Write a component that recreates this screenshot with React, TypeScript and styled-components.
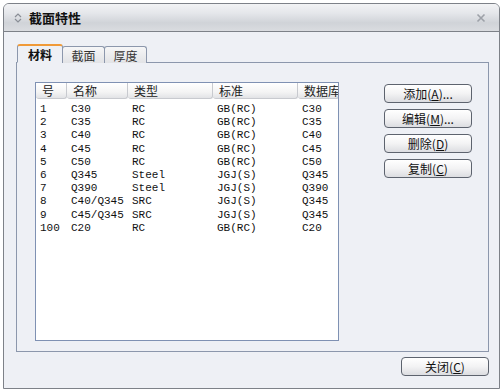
import * as React from 'react';
import styled, { createGlobalStyle } from 'styled-components';

const GlobalStyle = createGlobalStyle`
  html, body {
    margin: 0;
    padding: 0;
    background: #ffffff;
  }
  body {
    font-family: 'Liberation Sans', 'Noto Sans CJK SC', sans-serif;
    font-size: 12px;
    color: #000;
  }
`;

const rows = [
  ['1', 'C30', 'RC', 'GB(RC)', 'C30'],
  ['2', 'C35', 'RC', 'GB(RC)', 'C35'],
  ['3', 'C40', 'RC', 'GB(RC)', 'C40'],
  ['4', 'C45', 'RC', 'GB(RC)', 'C45'],
  ['5', 'C50', 'RC', 'GB(RC)', 'C50'],
  ['6', 'Q345', 'Steel', 'JGJ(S)', 'Q345'],
  ['7', 'Q390', 'Steel', 'JGJ(S)', 'Q390'],
  ['8', 'C40/Q345', 'SRC', 'JGJ(S)', 'Q345'],
  ['9', 'C45/Q345', 'SRC', 'JGJ(S)', 'Q345'],
  ['100', 'C20', 'RC', 'GB(RC)', 'C20'],
];

const columns = [
  { title: '号', width: 31 },
  { title: '名称', width: 61 },
  { title: '类型', width: 85 },
  { title: '标准', width: 85 },
  { title: '数据库', width: 41 },
];

const actions = [
  { label: '添加', key: 'A', tail: '...' },
  { label: '编辑', key: 'M', tail: '...' },
  { label: '删除', key: 'D', tail: '' },
  { label: '复制', key: 'C', tail: '' },
];

export default function App() {
  return (
    <>
      <GlobalStyle />
      <Window>
        <TitleBar>
          <TitleIcon viewBox="0 0 8 10">
            <path d="M1 4 L4 1 L7 4" fill="none" stroke="#8a8e96" strokeWidth="1.2" />
            <path d="M1 6 L4 9 L7 6" fill="none" stroke="#8a8e96" strokeWidth="1.2" />
          </TitleIcon>
          <Title>截面特性</Title>
          <CloseX viewBox="0 0 10 10">
            <path d="M1.5 1.5 L8.5 8.5 M8.5 1.5 L1.5 8.5" stroke="#9da1a8" strokeWidth="1.6" />
          </CloseX>
        </TitleBar>
        <Body>
          <TabStrip>
            <Tab $active>材料</Tab>
            <Tab>截面</Tab>
            <Tab>厚度</Tab>
          </TabStrip>
          <Panel>
            <ListBox>
              <HeaderRow>
                {columns.map((c) => (
                  <HeaderCell key={c.title} style={{ width: c.width }}>
                    {c.title}
                  </HeaderCell>
                ))}
              </HeaderRow>
              <Rows>
                {rows.map((r) => (
                  <Row key={r[0]}>
                    {r.map((v, i) => (
                      <Cell key={i} style={{ width: columns[i].width }}>
                        {v}
                      </Cell>
                    ))}
                  </Row>
                ))}
              </Rows>
            </ListBox>
            <ButtonColumn>
              {actions.map((a) => (
                <Button key={a.label}>
                  {a.label}(<u>{a.key}</u>){a.tail}
                </Button>
              ))}
            </ButtonColumn>
          </Panel>
          <Footer>
            <Button>
              关闭(<u>C</u>)
            </Button>
          </Footer>
        </Body>
      </Window>
    </>
  );
}

const Window = styled.div`
  margin: 3px 0 0 3px;
  width: 497px;
  height: 386px;
  box-sizing: border-box;
  border: 1px solid #7d8188;
  border-radius: 6px 6px 0 0;
  background: #eef0f5;
  display: flex;
  flex-direction: column;
  overflow: hidden;
`;

const TitleBar = styled.div`
  height: 27px;
  flex: none;
  display: flex;
  align-items: center;
  padding: 0 10px 0 10px;
  background: linear-gradient(#f2f3f5 0%, #e4e6ea 35%, #d0d3d8 70%, #dadce0 100%);
  border-bottom: 1px solid #7d8188;
`;

const TitleIcon = styled.svg`
  width: 8px;
  height: 10px;
  margin-right: 7px;
`;

const Title = styled.div`
  font-family: 'Noto Sans CJK SC', sans-serif;
  font-weight: bold;
  font-size: 13px;
  color: #111;
  flex: 1;
`;

const CloseX = styled.svg`
  width: 10px;
  height: 10px;
  margin-right: 3px;
`;

const Body = styled.div`
  flex: 1;
  display: flex;
  flex-direction: column;
  padding: 12px 10px 0 12px;
`;

const TabStrip = styled.div`
  display: flex;
  align-items: flex-end;
  height: 19px;
  padding-left: 1px;
  position: relative;
  z-index: 1;
`;

const Tab = styled.div<{ $active?: boolean }>`
  box-sizing: border-box;
  height: ${(p) => (p.$active ? '19px' : '17px')};
  width: ${(p) => (p.$active ? '46px' : '43px')};
  margin-right: -1px;
  border: 1px solid #8c97ac;
  border-bottom: ${(p) => (p.$active ? '1px solid #eef0f5' : 'none')};
  border-top: ${(p) => (p.$active ? '2px solid #f09a38' : '1px solid #8c97ac')};
  border-radius: 3px 3px 0 0;
  background: ${(p) =>
    p.$active ? '#eef0f5' : 'linear-gradient(#f6f6f7, #e2e3e6)'};
  font-family: 'Noto Sans CJK SC', sans-serif;
  font-size: 12px;
  font-weight: ${(p) => (p.$active ? 'bold' : 'normal')};
  color: ${(p) => (p.$active ? '#111' : '#333')};
  display: flex;
  align-items: center;
  justify-content: center;
  padding-top: ${(p) => (p.$active ? '1px' : '0')};
`;

const Panel = styled.div`
  box-sizing: border-box;
  width: 473px;
  height: 290px;
  margin-top: -1px;
  border: 1px solid #8c97ac;
  display: flex;
  align-items: flex-start;
  padding: 19px 17px 10px 18px;
`;

const ListBox = styled.div`
  box-sizing: border-box;
  width: 304px;
  height: 259px;
  border: 1px solid #7f91b3;
  background: #ffffff;
  overflow: hidden;
  flex: none;
`;

const HeaderRow = styled.div`
  display: flex;
  height: 16px;
  white-space: nowrap;
`;

const HeaderCell = styled.div`
  box-sizing: border-box;
  flex: none;
  height: 16px;
  padding-left: 6px;
  font-family: 'Noto Sans CJK SC', sans-serif;
  font-size: 12px;
  line-height: 16px;
  color: #222;
  background: linear-gradient(#ffffff 0%, #f4f4f4 60%, #e2e3e6 100%);
  border-right: 1px solid #c8cacf;
  border-bottom: 1px solid #c8cacf;
  border-radius: 0 0 3px 3px;
  overflow: hidden;
`;

const Rows = styled.div`
  padding-top: 4px;
`;

const Row = styled.div`
  display: flex;
  height: 13.2px;
  white-space: nowrap;
`;

const Cell = styled.div`
  box-sizing: border-box;
  flex: none;
  padding-left: 4px;
  font-family: 'Liberation Mono', 'Noto Sans CJK SC', monospace;
  font-size: 11px;
  line-height: 13px;
  color: #111;
  overflow: hidden;
`;

const ButtonColumn = styled.div`
  margin-left: 45px;
  margin-top: 2px;
  display: flex;
  flex-direction: column;
  gap: 6px;
`;

const Button = styled.div`
  box-sizing: border-box;
  width: 88px;
  height: 19px;
  border: 1px solid #5d636e;
  border-radius: 4px;
  background: linear-gradient(#ffffff 0%, #f3f3f4 50%, #dcdde1 100%);
  display: flex;
  align-items: center;
  justify-content: center;
  font-family: 'Noto Sans CJK SC', sans-serif;
  font-size: 12px;
  color: #111;
  white-space: nowrap;
  u {
    text-underline-offset: 1px;
  }
`;

const Footer = styled.div`
  display: flex;
  justify-content: flex-end;
  width: 473px;
  margin-top: 5px;
`;
